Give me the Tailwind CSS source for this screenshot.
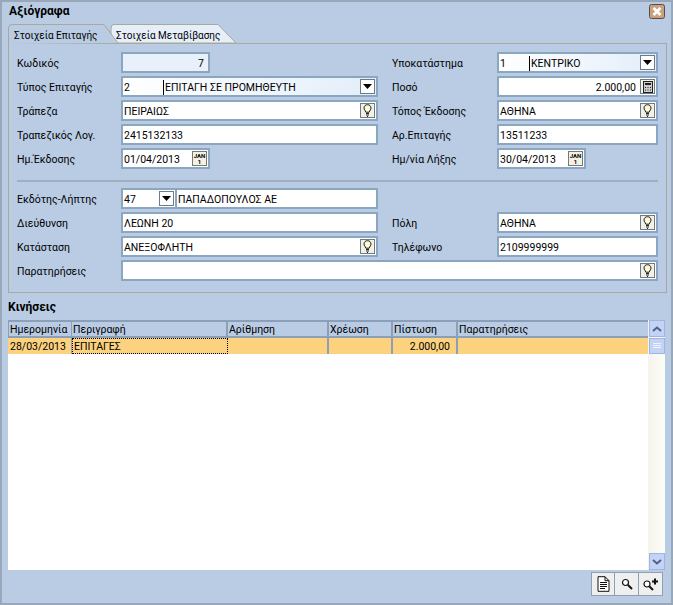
<!DOCTYPE html>
<html><head><meta charset="utf-8"><script src="https://cdn.jsdelivr.net/npm/@tailwindcss/browser@4"></script></head>
<body class="m-0 overflow-hidden">
<div class="w-[673px] h-[605px] bg-[#b9cce4] border-2 border-[#99a8b8] font-['Roboto',sans-serif] text-[10.5px] leading-[15px] text-black flex flex-col pl-[6px] pr-[3px] overflow-hidden">
  <div class="h-[22px] flex items-start justify-between pt-[2px] pr-[3px]">
    <span class="font-bold text-[12px] pl-[1px]">Αξιόγραφα</span>
    <svg width="16" height="15" viewBox="0 0 16 15"><rect x=".5" y=".5" width="15" height="14" rx="2" fill="#c9a17c" stroke="#5a4a50"/><path d="M4.500 4 11.500 11M11.500 4 4.500 11" stroke="#fff" stroke-width="2.800"/></svg>
  </div>
  <div class="flex h-[19px] relative z-10 text-[10px]">
    <div class="relative w-[102px] h-[20px] pl-[6px] pt-[4px]">
      <svg class="absolute left-0 top-0" width="112" height="20" viewBox="0 0 112 20"><path d="M.5 20V4Q.5 .5 4 .5H96L110 19" fill="#b9cce4" stroke="#a8a89c"/></svg>
      <span class="relative">Στοιχεία Επιταγής</span>
    </div>
    <div class="relative w-[127px] pl-[6px] pt-[4px]">
      <svg class="absolute left-0 top-0 -z-10" width="127" height="19" viewBox="0 0 127 19"><path d="M1 4Q1 .5 4 .5H108L126 19H1Z" fill="#e6eff9" stroke="#a8a89c"/></svg>
      <span>Στοιχεία Μεταβίβασης</span>
    </div>
  </div>
  <div class="w-[659px] h-[250px] border border-[#a8a89c] pl-[8px] pt-[8px] flex flex-col">
    <div class="grid grid-cols-[104px_257px_14px_105px_161px] auto-rows-[21px] gap-y-[3px] items-center [&>div]:pt-[2px] [&>span]:pt-[2px]">
      <span>Κωδικός</span>
      <div class="w-[89px] h-[21px] border-2 border-[#8ba6c0] bg-[#e8f1fb] flex items-center justify-end pr-[4px]">7</div>
      <span></span><span>Υποκατάστημα</span>
      <div class="h-[21px] border-2 border-[#8ba6c0] bg-gradient-to-r from-white to-[#e3eefa] flex items-center pl-[1px] relative">
        <span class="w-[29px]">1</span><span class="border-l border-black pl-[1px] h-[15px]">ΚΕΝΤΡΙΚΟ</span>
        <div class="absolute right-[1px] top-0 w-[15px] h-[15px] mt-[1px] border border-[#6d7a88] bg-white flex items-center justify-center"><svg width="9" height="5"><path d="M0 0H9L4.500 5Z"/></svg></div>
      </div>

      <span>Τύπος Επιταγής</span>
      <div class="h-[21px] border-2 border-[#8ba6c0] bg-gradient-to-r from-white to-[#e3eefa] flex items-center pl-[1px] relative">
        <span class="w-[39px]">2</span><span class="border-l border-black pl-[1px] h-[15px]">ΕΠΙΤΑΓΗ ΣΕ ΠΡΟΜΗΘΕΥΤΗ</span>
        <div class="absolute right-[1px] top-0 w-[15px] h-[15px] mt-[1px] border border-[#6d7a88] bg-white flex items-center justify-center"><svg width="9" height="5"><path d="M0 0H9L4.500 5Z"/></svg></div>
      </div>
      <span></span><span>Ποσό</span>
      <div class="h-[21px] border-2 border-[#8ba6c0] bg-white flex items-center justify-end pr-[20px] relative">2.000,00
        <div class="absolute right-[1px] top-0 w-[15px] h-[15px] mt-[1px] border border-[#6d7a88] bg-[#f3f1e4] flex items-center justify-center"><svg width="10" height="12" viewBox="0 0 10 12"><rect x=".5" y=".5" width="9" height="11" fill="#ccc" stroke="#222"/><path d="M2 2H8V4H2ZM2 6H3V7H2ZM4.500 6H5.500V7H4.500ZM7 6H8V7H7ZM2 8.500H3V9.500H2ZM4.500 8.500H5.500V9.500H4.500ZM7 8.500H8V9.500H7Z" fill="#222"/></svg></div>
      </div>

      <span>Τράπεζα</span>
      <div class="h-[21px] border-2 border-[#8ba6c0] bg-white flex items-center pl-[1px] relative">ΠΕΙΡΑΙΩΣ
        <div class="absolute right-[1px] top-0 w-[15px] h-[15px] mt-[1px] border border-[#6d7a88] bg-[#f3f1e4] flex items-center justify-center"><svg width="9" height="13" viewBox="0 0 9 13"><path d="M4.500 .7C2.300 .7 1 2.200 1 4c0 1.600 1.300 2.400 1.800 4.200h3.400C6.700 6.400 8 5.600 8 4 8 2.200 6.700 .7 4.500 .7Z" fill="#fdf9dc" stroke="#222"/><path d="M3 9.500H6M3 11H6M4 12.500H5" stroke="#222"/></svg></div>
      </div>
      <span></span><span>Τόπος Έκδοσης</span>
      <div class="h-[21px] border-2 border-[#8ba6c0] bg-white flex items-center pl-[1px] relative">ΑΘΗΝΑ
        <div class="absolute right-[1px] top-0 w-[15px] h-[15px] mt-[1px] border border-[#6d7a88] bg-[#f3f1e4] flex items-center justify-center"><svg width="9" height="13" viewBox="0 0 9 13"><path d="M4.500 .7C2.300 .7 1 2.200 1 4c0 1.600 1.300 2.400 1.800 4.200h3.400C6.700 6.400 8 5.600 8 4 8 2.200 6.700 .7 4.500 .7Z" fill="#fdf9dc" stroke="#222"/><path d="M3 9.500H6M3 11H6M4 12.500H5" stroke="#222"/></svg></div>
      </div>

      <span>Τραπεζικός Λογ.</span>
      <div class="h-[21px] border-2 border-[#8ba6c0] bg-white flex items-center pl-[1px]">2415132133</div>
      <span></span><span>Αρ.Επιταγής</span>
      <div class="h-[21px] border-2 border-[#8ba6c0] bg-white flex items-center pl-[1px]">13511233</div>

      <span>Ημ.Έκδοσης</span>
      <div class="w-[89px] h-[21px] border-2 border-[#8ba6c0] bg-white flex items-center pl-[1px] relative">01/04/2013
        <div class="absolute right-[1px] top-0 w-[15px] h-[15px] mt-[1px] border border-[#777] bg-[#f3f1e4] flex flex-col items-center font-bold text-[6px] leading-[6px]"><div class="w-full h-[1px] bg-[#5a2020] mb-[1px]"></div>JAN<span>1</span></div>
      </div>
      <span></span><span>Ημ/νία Λήξης</span>
      <div class="w-[89px] h-[21px] border-2 border-[#8ba6c0] bg-white flex items-center pl-[1px] relative">30/04/2013
        <div class="absolute right-[1px] top-0 w-[15px] h-[15px] mt-[1px] border border-[#777] bg-[#f3f1e4] flex flex-col items-center font-bold text-[6px] leading-[6px]"><div class="w-full h-[1px] bg-[#5a2020] mb-[1px]"></div>JAN<span>1</span></div>
      </div>
    </div>
    <div class="w-[641px] h-0 border-t-2 border-[#9db0c6] mt-[11px] mb-[6px]"></div>
    <div class="grid grid-cols-[104px_257px_14px_105px_161px] auto-rows-[21px] gap-y-[3px] items-center [&>div]:pt-[2px] [&>span]:pt-[2px]">
      <span>Εκδότης-Λήπτης</span>
      <div class="flex h-[21px] gap-0 !pt-0">
        <div class="w-[56px] h-[21px] border-2 border-[#8ba6c0] bg-white flex items-center pl-[1px] pt-[2px] relative">47
          <div class="absolute right-[1px] top-0 w-[15px] h-[15px] mt-[1px] border border-[#6d7a88] bg-white flex items-center justify-center"><svg width="9" height="5"><path d="M0 0H9L4.500 5Z"/></svg></div>
        </div>
        <div class="flex-1 h-[21px] border-2 border-l-0 border-[#8ba6c0] bg-white flex items-center pl-[1px] pt-[2px]">ΠΑΠΑΔΟΠΟΥΛΟΣ ΑΕ</div>
      </div>
      <span></span><span></span><span></span>

      <span>Διεύθυνση</span>
      <div class="h-[21px] border-2 border-[#8ba6c0] bg-white flex items-center pl-[1px]">ΛΕΩΝΗ 20</div>
      <span></span><span>Πόλη</span>
      <div class="h-[21px] border-2 border-[#8ba6c0] bg-white flex items-center pl-[1px] relative">ΑΘΗΝΑ
        <div class="absolute right-[1px] top-0 w-[15px] h-[15px] mt-[1px] border border-[#6d7a88] bg-[#f3f1e4] flex items-center justify-center"><svg width="9" height="13" viewBox="0 0 9 13"><path d="M4.500 .7C2.300 .7 1 2.200 1 4c0 1.600 1.300 2.400 1.800 4.200h3.400C6.700 6.400 8 5.600 8 4 8 2.200 6.700 .7 4.500 .7Z" fill="#fdf9dc" stroke="#222"/><path d="M3 9.500H6M3 11H6M4 12.500H5" stroke="#222"/></svg></div>
      </div>

      <span>Κατάσταση</span>
      <div class="h-[21px] border-2 border-[#8ba6c0] bg-white flex items-center pl-[1px] relative">ΑΝΕΞΟΦΛΗΤΗ
        <div class="absolute right-[1px] top-0 w-[15px] h-[15px] mt-[1px] border border-[#6d7a88] bg-[#f3f1e4] flex items-center justify-center"><svg width="9" height="13" viewBox="0 0 9 13"><path d="M4.500 .7C2.300 .7 1 2.200 1 4c0 1.600 1.300 2.400 1.800 4.200h3.400C6.700 6.400 8 5.600 8 4 8 2.200 6.700 .7 4.500 .7Z" fill="#fdf9dc" stroke="#222"/><path d="M3 9.500H6M3 11H6M4 12.500H5" stroke="#222"/></svg></div>
      </div>
      <span></span><span>Τηλέφωνο</span>
      <div class="h-[21px] border-2 border-[#8ba6c0] bg-white flex items-center pl-[1px]">2109999999</div>

      <span>Παρατηρήσεις</span>
      <div class="col-span-4 h-[21px] border-2 border-[#8ba6c0] bg-white relative">
        <div class="absolute right-[1px] top-0 w-[15px] h-[15px] mt-[1px] border border-[#6d7a88] bg-[#f3f1e4] flex items-center justify-center"><svg width="9" height="13" viewBox="0 0 9 13"><path d="M4.500 .7C2.300 .7 1 2.200 1 4c0 1.600 1.300 2.400 1.800 4.200h3.400C6.700 6.400 8 5.600 8 4 8 2.200 6.700 .7 4.500 .7Z" fill="#fdf9dc" stroke="#222"/><path d="M3 9.500H6M3 11H6M4 12.500H5" stroke="#222"/></svg></div>
      </div>
    </div>
  </div>
  <div class="h-[27px] flex items-end pb-[5px] font-bold text-[12px]">Κινήσεις</div>
  <div class="flex h-[250px] w-[657px]">
    <div class="w-[640px] bg-white flex flex-col">
      <div class="flex h-[18px] border-t-2 border-b-2 border-[#8ba0b8] bg-[#b9cce4] leading-[14px] [&>div]:pt-[1px]">
        <div class="w-[64px] border-l border-r border-[#8ba0b8] pl-[1px]">Ημερομηνία</div>
        <div class="w-[156px] border-r-2 border-[#8ba0b8] pl-[1px]">Περιγραφή</div>
        <div class="w-[101px] border-r-2 border-[#8ba0b8] pl-[1px]">Αρίθμηση</div>
        <div class="w-[64px] border-r-2 border-[#8ba0b8] pl-[1px]">Χρέωση</div>
        <div class="w-[65px] border-r-2 border-[#8ba0b8] pl-[1px]">Πίστωση</div>
        <div class="flex-1 pl-[1px]">Παρατηρήσεις</div>
      </div>
      <div class="flex h-[16px] bg-[#fcd27f] leading-[16px]">
        <div class="w-[64px] border-r border-[#8ba0b8] pl-[2px] pt-[1px] leading-[15px]">28/03/2013</div>
        <div class="w-[156px] border border-dotted border-black pl-[1px] leading-[15px]">ΕΠΙΤΑΓΕΣ</div>
        <div class="w-[101px] border-r-2 border-[#8ba0b8]"></div>
        <div class="w-[64px] border-r-2 border-[#8ba0b8]"></div>
        <div class="w-[65px] border-r-2 border-[#8ba0b8] text-right pr-[6px] pt-[1px] leading-[15px]">2.000,00</div>
        <div class="flex-1"></div>
      </div>
    </div>
    <div class="w-[17px] bg-gradient-to-r from-[#f4f3ec] to-[#fdfdf8] flex flex-col items-center">
      <div class="w-[16px] h-[17px] bg-[#c3d3f5] border border-[#9fb4e0] flex items-center justify-center"><svg width="10" height="6"><path d="M1 5 5 1.500 9 5" fill="none" stroke="#4d6185" stroke-width="2"/></svg></div>
      <div class="w-[16px] h-[16px] mt-[1px] bg-[#c3d3f5] border border-[#9fb4e0] flex items-center justify-center"><svg width="8" height="8"><path d="M0 1.500H8M0 3.500H8M0 5.500H8" stroke="#eef3fd" stroke-width="1"/></svg></div>
      <div class="flex-1"></div>
      <div class="w-[16px] h-[17px] bg-[#c3d3f5] border border-[#9fb4e0] flex items-center justify-center"><svg width="10" height="6"><path d="M1 1 5 4.500 9 1" fill="none" stroke="#4d6185" stroke-width="2"/></svg></div>
    </div>
  </div>
  <div class="flex justify-end pt-[2px] pr-[5px]">
    <div class="w-[24px] h-[24px] bg-[#efefef] border border-[#8fa0b0] flex items-center justify-center"><svg width="13" height="16" viewBox="0 0 13 16"><path d="M1 .7H8L12 4.700V15.300H1ZM8 .7V4.700H12M3 6.500H10M3 8.500H10M3 10.500H10M3 12.500H8" fill="#fff" stroke="#111"/></svg></div>
    <div class="w-[24px] h-[24px] bg-[#efefef] border border-l-0 border-[#8fa0b0] flex items-center justify-center"><svg width="12" height="12" viewBox="0 0 12 12"><circle cx="4.500" cy="4.500" r="3" fill="#fff" stroke="#111" stroke-width="1.200"/><path d="M7 7 11 11" stroke="#111" stroke-width="2"/></svg></div>
    <div class="w-[24px] h-[24px] bg-[#efefef] border border-l-0 border-[#8fa0b0] flex items-center justify-center"><svg width="17" height="13" viewBox="0 0 17 13"><circle cx="5" cy="6" r="3" fill="#fff" stroke="#111" stroke-width="1.200"/><path d="M7.500 8.500 11 12" stroke="#111" stroke-width="2"/><path d="M10 3.500H16M13 .5V6.500" stroke="#111" stroke-width="2"/></svg></div>
  </div>
</div>
</body></html>
